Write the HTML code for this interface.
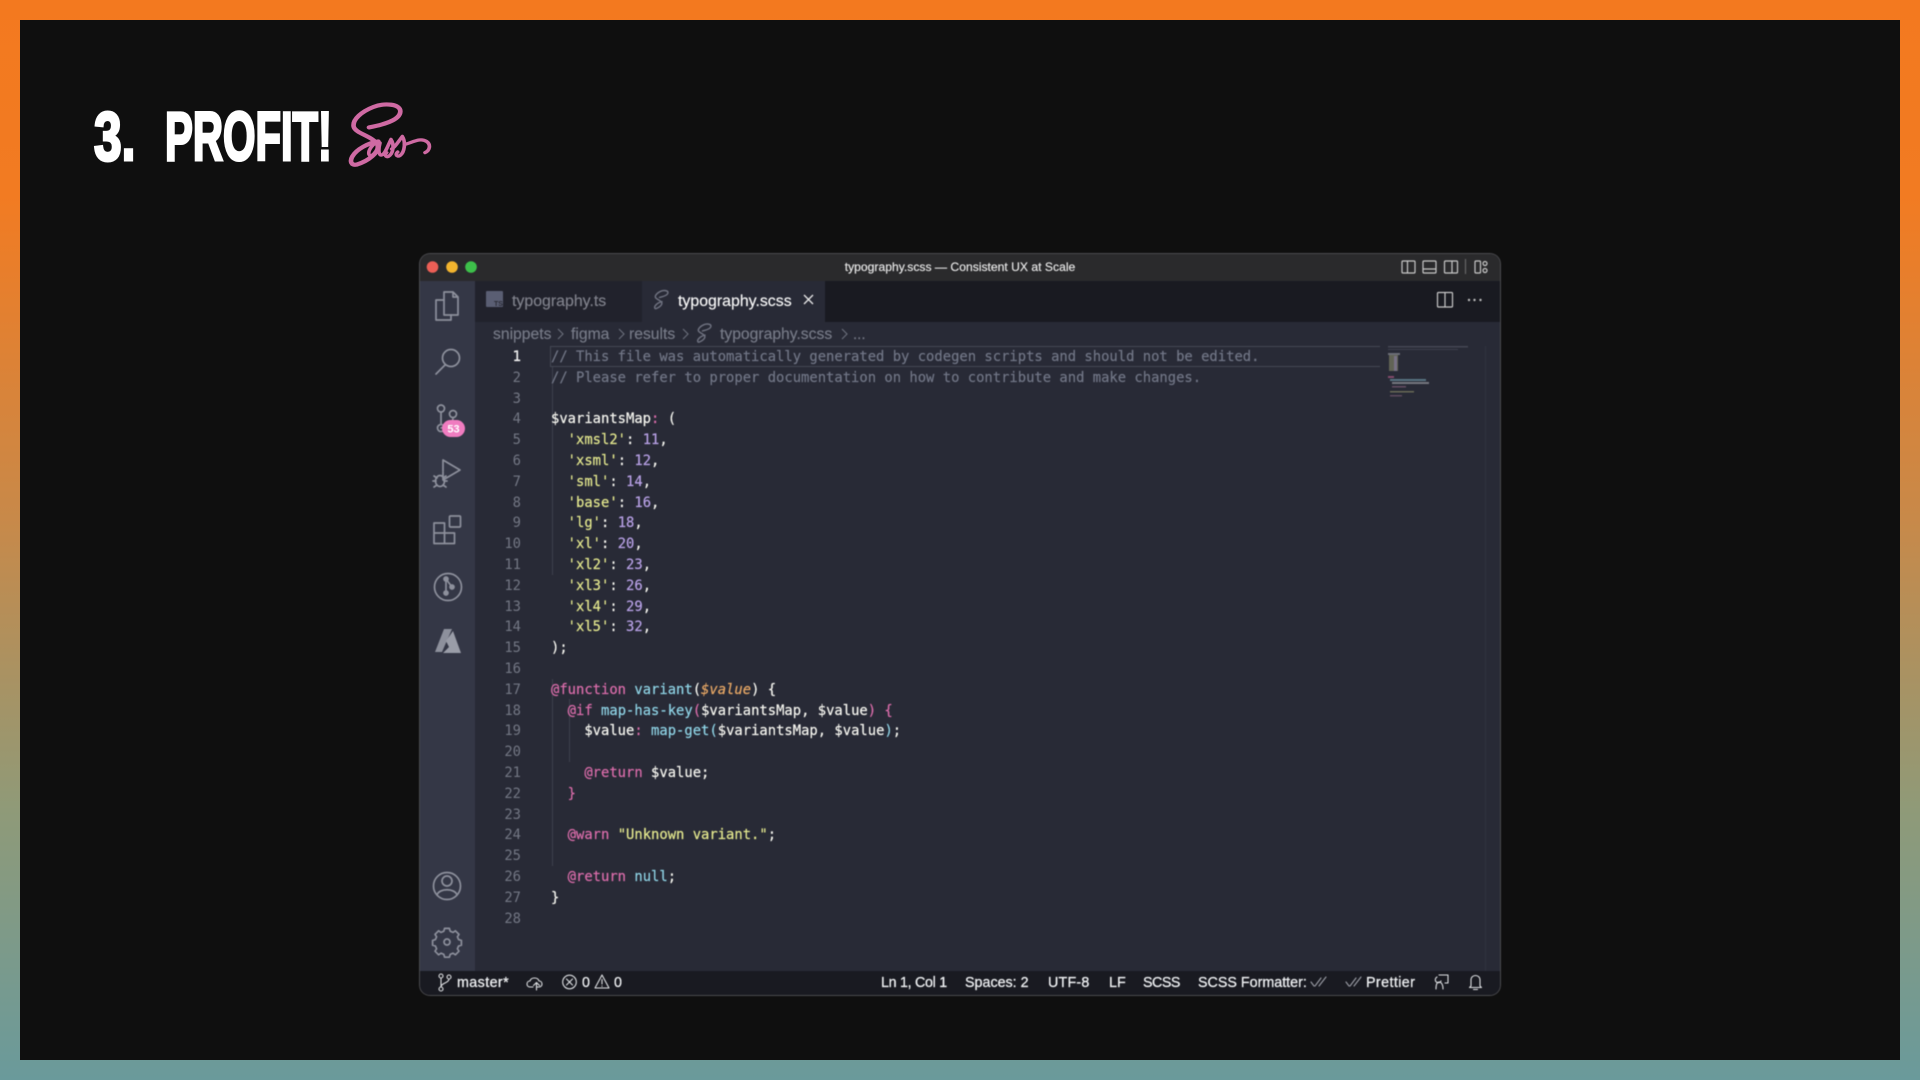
<!DOCTYPE html>
<html><head><meta charset="utf-8"><title>3. Profit!</title>
<style>
*{box-sizing:border-box}
html,body{margin:0;padding:0;width:1920px;height:1080px;overflow:hidden;background:#000}
#bg{position:absolute;inset:0;background:linear-gradient(180deg,#f3791f 0%,#f27b22 18%,#c88949 48%,#8f9a78 75%,#6a9a9b 100%)}
#panel{position:absolute;left:20px;top:20px;width:1880px;height:1040px;background:#0f0f0f}
.abs{position:absolute;white-space:nowrap}
.ttl{position:absolute;color:#fff;font:bold 69px/69px "Liberation Sans",sans-serif;transform-origin:0 0;-webkit-text-stroke:3px #fff;white-space:nowrap}
#win{position:absolute;left:420px;top:254px;width:1080px;height:741px;border-radius:10px;overflow:hidden;background:#282a36;box-shadow:0 0 0 1px #4a4a4d;filter:blur(.4px);font-family:"Liberation Sans",sans-serif}
#win svg{position:absolute;left:0;top:0}
.ui{position:absolute;white-space:nowrap;line-height:20px;-webkit-text-stroke:.15px currentColor}
#code,#nums{position:absolute;margin:0;font:13.85px/20.79px "DejaVu Sans Mono","Liberation Mono",monospace;top:93px;white-space:pre;color:#f6f6f0;-webkit-text-stroke:.2px currentColor}
#nums{left:60px;width:41px;text-align:right;color:#737784;-webkit-text-stroke:0}
#nums b{font-weight:normal;color:#f4f4f4;-webkit-text-stroke:.3px #f4f4f4}
#code{left:131px}
.c{color:#717686}.s{color:#e3e78e}.n{color:#b8a1e6}.p{color:#db6dab}.f{color:#8fd4e6}.o{color:#eaa966;font-style:italic}.g{color:#db6dab}
.st{color:#f0f2f4;font-size:14.3px;top:719px;-webkit-text-stroke:.25px currentColor}
</style></head><body>
<div id="bg"></div>
<div id="panel"></div>
<div class="ttl" style="left:94px;top:102px;transform:scaleX(.72)">3.</div>
<div class="ttl" style="left:165px;top:102px;transform:scaleX(.605)">PROFIT!</div>
<svg class="abs" style="left:0;top:0" width="1920" height="300" viewBox="0 0 1920 300" fill="none">
<g transform="translate(345 101) scale(.3333 .3)" stroke="#cf6aa3" stroke-linecap="round" stroke-linejoin="round" fill="none">
<path stroke-width="14" d="M72 88C110 80 165 65 166 35C167 10 120 5 85 20C50 35 22 62 26 85C30 108 85 118 97 145C106 170 70 200 35 212C18 216 14 200 22 185C35 160 70 140 100 135"/>
<path stroke-width="11" d="M100 135C85 140 68 165 72 178C78 192 95 170 105 140C100 160 100 182 110 180C120 178 128 150 138 128C148 145 146 175 130 185C122 188 118 180 125 172M140 160C150 155 160 135 172 118C182 135 180 170 165 182C155 188 150 178 158 170M178 145C200 140 225 120 245 135C258 145 255 165 240 172"/>
</g>
</svg>

<div id="win">
<div style="position:absolute;left:0;top:0;width:1080px;height:27px;background:#2a2a2c"></div>
<div style="position:absolute;left:0;top:27px;width:1080px;height:41px;background:#191a21"></div>
<div style="position:absolute;left:0;top:27px;width:55px;height:690px;background:#343746"></div>
<div style="position:absolute;left:55px;top:27px;width:167px;height:41px;background:#21222c"></div>
<div style="position:absolute;left:222px;top:27px;width:183px;height:41px;background:#282a36"></div>
<div style="position:absolute;left:0;top:717px;width:1080px;height:24px;background:#191a21"></div>
<div style="position:absolute;left:130px;top:92px;width:830px;height:21px;border:1px solid #444753;border-right:0"></div>
<div style="position:absolute;left:132px;top:113px;width:1px;height:208px;background:#3d404d"></div>
<div style="position:absolute;left:132px;top:425px;width:1px;height:187px;background:#3d404d"></div>
<div style="position:absolute;left:149px;top:445px;width:1px;height:63px;background:#3d404d"></div>
<div style="position:absolute;left:1065px;top:92px;width:1px;height:625px;background:#2f323e"></div>

<div class="ui" style="left:0;width:1080px;top:3px;text-align:center;color:#eaeaea;font-size:12.150px">typography.scss — Consistent UX at Scale</div>
<div class="ui" style="left:92px;top:37.500px;font-size:15.900px;color:#80828c">typography.ts</div>
<div class="ui" style="left:258px;top:37.500px;font-size:15.900px;color:#f8f8f8">typography.scss</div>
<div class="ui" style="left:73px;top:71px;font-size:15.700px;color:#777b88">snippets</div>
<div class="ui" style="left:151px;top:71px;font-size:15.700px;color:#777b88">figma</div>
<div class="ui" style="left:209px;top:71px;font-size:15.700px;color:#777b88">results</div>
<div class="ui" style="left:300px;top:71px;font-size:15.700px;color:#777b88">typography.scss</div>
<div class="ui" style="left:433px;top:71px;font-size:15px;color:#777b88">...</div>

<pre id="nums"><b>1</b>
2
3
4
5
6
7
8
9
10
11
12
13
14
15
16
17
18
19
20
21
22
23
24
25
26
27
28</pre>
<pre id="code"><span class="c">// This file was automatically generated by codegen scripts and should not be edited.</span>
<span class="c">// Please refer to proper documentation on how to contribute and make changes.</span>

$variantsMap<span class="p">:</span> (
  <span class="s">'xmsl2'</span>: <span class="n">11</span>,
  <span class="s">'xsml'</span>: <span class="n">12</span>,
  <span class="s">'sml'</span>: <span class="n">14</span>,
  <span class="s">'base'</span>: <span class="n">16</span>,
  <span class="s">'lg'</span>: <span class="n">18</span>,
  <span class="s">'xl'</span>: <span class="n">20</span>,
  <span class="s">'xl2'</span>: <span class="n">23</span>,
  <span class="s">'xl3'</span>: <span class="n">26</span>,
  <span class="s">'xl4'</span>: <span class="n">29</span>,
  <span class="s">'xl5'</span>: <span class="n">32</span>,
);

<span class="p">@function</span> <span class="f">variant</span>(<span class="o">$value</span>) {
  <span class="p">@if</span> <span class="f">map-has-key</span><span class="g">(</span>$variantsMap, $value<span class="g">) {</span>
    $value<span class="p">:</span> <span class="f">map-get</span><span class="f">(</span>$variantsMap, $value<span class="f">)</span>;

    <span class="p">@return</span> $value;
  <span class="g">}</span>

  <span class="p">@warn</span> <span class="s">"Unknown variant."</span>;

  <span class="p">@return</span> <span class="f">null</span>;
}
</pre>

<div class="ui st" style="left:37px;letter-spacing:.4px">master*</div>
<div class="ui st" style="left:162px">0</div>
<div class="ui st" style="left:194px">0</div>
<div class="ui st" style="left:461px;letter-spacing:-.3px">Ln 1, Col 1</div>
<div class="ui st" style="left:545px">Spaces: 2</div>
<div class="ui st" style="left:628px;letter-spacing:.2px">UTF-8</div>
<div class="ui st" style="left:689px">LF</div>
<div class="ui st" style="left:723px;letter-spacing:-.5px">SCSS</div>
<div class="ui st" style="left:778px">SCSS Formatter:</div>
<div class="ui st" style="left:946px;letter-spacing:.4px">Prettier</div>

<svg width="1080" height="741" viewBox="420 254 1080 741" fill="none">
<circle cx="432.500" cy="267" r="5.800" fill="#ec5f56"/><circle cx="452" cy="267" r="5.800" fill="#f2b42e"/><circle cx="471" cy="267" r="5.800" fill="#3dc04a"/>
<g stroke="#c8c8c8" stroke-width="1.200">
<rect x="1402" y="261" width="13" height="12" rx="1"/><path d="M1407.500 261v12"/>
<rect x="1423" y="261" width="13" height="12" rx="1"/><path d="M1423 269h13"/>
<rect x="1444.500" y="261" width="13" height="12" rx="1"/><path d="M1452 261v12"/>
<path d="M1465.500 259v15" stroke="#666"/>
<rect x="1475" y="261" width="5.500" height="12" rx="1"/><circle cx="1485" cy="263.500" r="2"/><circle cx="1485" cy="270.500" r="2"/>
<rect x="1437.500" y="292.500" width="15" height="14.500" rx="1"/><path d="M1445 292.500v14.500"/>
</g>
<g fill="#bdbdbd"><circle cx="1469" cy="300" r="1.200"/><circle cx="1474.500" cy="300" r="1.200"/><circle cx="1480.500" cy="300" r="1.200"/></g>
<path d="M804 295l9 9M813 295l-9 9" stroke="#e8e8e8" stroke-width="1.300"/>
<rect x="486" y="291" width="17" height="16" rx="1" fill="#5a5e73"/>
<text x="494" y="306" font-family="Liberation Sans" font-size="7" font-weight="bold" fill="#2a2b35">TS</text>
<g stroke="#6f7280" stroke-width="16" fill="none" stroke-linecap="round">
<path transform="translate(653 289.500) scale(.09)" d="M72 88C110 80 165 65 166 35C167 10 120 5 85 20C50 35 22 62 26 85C30 108 85 118 97 145C106 170 70 200 35 212C18 216 14 200 22 185C35 160 70 140 100 135"/>
<path transform="translate(696 323) scale(.09)" d="M72 88C110 80 165 65 166 35C167 10 120 5 85 20C50 35 22 62 26 85C30 108 85 118 97 145C106 170 70 200 35 212C18 216 14 200 22 185C35 160 70 140 100 135"/>
</g>
<g stroke="#6b6f7c" stroke-width="1.100"><path d="M558 329l5 5-5 5M619 329l5 5-5 5M683 329l5 5-5 5M842 329l5 5-5 5"/></g>
<g stroke="#8d909c" stroke-width="1.700" stroke-linejoin="round" stroke-linecap="round">
<path d="M444 292h9l5 5v18h-14zM453 292v5h5"/><path d="M444 300h-8v20h15v-5"/>
<circle cx="451" cy="358" r="8.500"/><path d="M445 365l-9 9"/>
<circle cx="441" cy="408.500" r="3.500"/><circle cx="453" cy="414" r="3.500"/><circle cx="441" cy="428" r="3.500"/><path d="M441 412v12M453 418c0 6-6 7-12 10"/>
<path d="M443 460l17 10-17 10v-8M443 460v11"/>
<ellipse cx="440" cy="481" rx="4.500" ry="5.500"/><path d="M434 476l3 2M446 476l-3 2M433 481h3M444 481h3M434 487l3-2M446 487l-3-2"/>
<path d="M434 523h10.500v10h10v10.500h-20.500zM434 533h10.500v10.500"/><rect x="449.500" y="516" width="11" height="11" rx="1"/>
<circle cx="448" cy="587" r="13.500"/><circle cx="446" cy="579" r="2" fill="#8d909c"/><circle cx="446" cy="593" r="2" fill="#8d909c"/><circle cx="452" cy="587" r="2" fill="#8d909c"/><path d="M446 579v14M446 579l6 8"/>
<circle cx="447" cy="886" r="13.500"/><circle cx="447" cy="881" r="5"/><path d="M437 895c2-7 18-7 20 0"/>
<path stroke-width="2.100" transform="translate(447 942) scale(.8) translate(-447 -946)" d="M444 929h6l1 3.500 3.500 1.500 3-2 4.500 4.500-2 3 1.500 3.500 3.500 1v6l-3.500 1-1.500 3.500 2 3-4.500 4.500-3-2-3.500 1.500-1 3.500h-6l-1-3.500-3.500-1.500-3 2-4.500-4.500 2-3-1.500-3.500-3.500-1v-6l3.500-1 1.500-3.500-2-3 4.500-4.500 3 2 3.500-1.500z"/><circle cx="447" cy="942" r="3"/>
</g>
<path d="M444 629h8l-10 23h-7z" fill="#8d909c"/>
<path d="M453 631l8 22h-18l6-6-3-6z" fill="#9a9da8"/>
<rect x="442" y="420" width="23" height="17" rx="8.500" fill="#f07cc0"/>
<text x="453.500" y="432.500" text-anchor="middle" font-family="Liberation Sans" font-size="11" font-weight="bold" fill="#fff">53</text>
<g stroke="#dfe1e4" stroke-width="1.100" stroke-linejoin="round" stroke-linecap="round">
<circle cx="441" cy="976" r="2"/><circle cx="441" cy="989" r="2"/><circle cx="449" cy="977" r="2"/><path d="M441 978v9M449 979c0 4-8 4-8 8"/>
<path d="M533 987h-3c-4 0-4-6 0-6 1-4 8-4 9 0 4 0 4 6 0 6h-2M536.500 990v-7M533.500 985.500l3-3 3 3"/>
<circle cx="569.500" cy="982" r="6.800"/><path d="M566.500 979l6 6M572.500 979l-6 6"/>
<path d="M602 975l7 13h-14zM602 979.500v4.500M602 986v.3"/>
<path d="M1311 982l3 4M1315 986l6-8M1319 986l7-9" stroke="#9a9ca5"/>
<path d="M1346 982l3 4M1350 986l6-8M1354 986l7-9" stroke="#9a9ca5"/>
<path d="M1439 975h9v8h-3M1436 989c0-5 1-7 3-7s4 2 4 7M1437 977a3 3 0 1 0 4 4"/>
<path d="M1471 986v-6c0-6 9-6 9 0v6l1.500 1.500h-12zM1473.500 989.500h4"/>
</g>
<g>
<rect x="1388" y="346" width="80" height="1.500" fill="#6d7180" opacity=".4"/>
<rect x="1388" y="349" width="70" height="1" fill="#6d7180" opacity=".3"/>
<rect x="1388" y="353" width="12" height="2" fill="#aeb0b5" opacity=".5"/>
<rect x="1389" y="355" width="9" height="16" fill="#8f9270" opacity=".55"/>
<rect x="1394" y="356" width="3" height="15" fill="#8f80b8" opacity=".5"/>
<rect x="1388" y="376" width="6" height="2" fill="#c0608f" opacity=".6"/>
<rect x="1390" y="379" width="36" height="2" fill="#7fb0c0" opacity=".55"/>
<rect x="1392" y="382" width="37" height="2" fill="#b5b7bb" opacity=".55"/>
<rect x="1392" y="386" width="14" height="1.500" fill="#a07090" opacity=".5"/>
<rect x="1390" y="391" width="24" height="1.500" fill="#b5b57c" opacity=".45"/>
<rect x="1390" y="395" width="12" height="1.500" fill="#a07090" opacity=".45"/>
</g>
</svg>
</div>
</body></html>
